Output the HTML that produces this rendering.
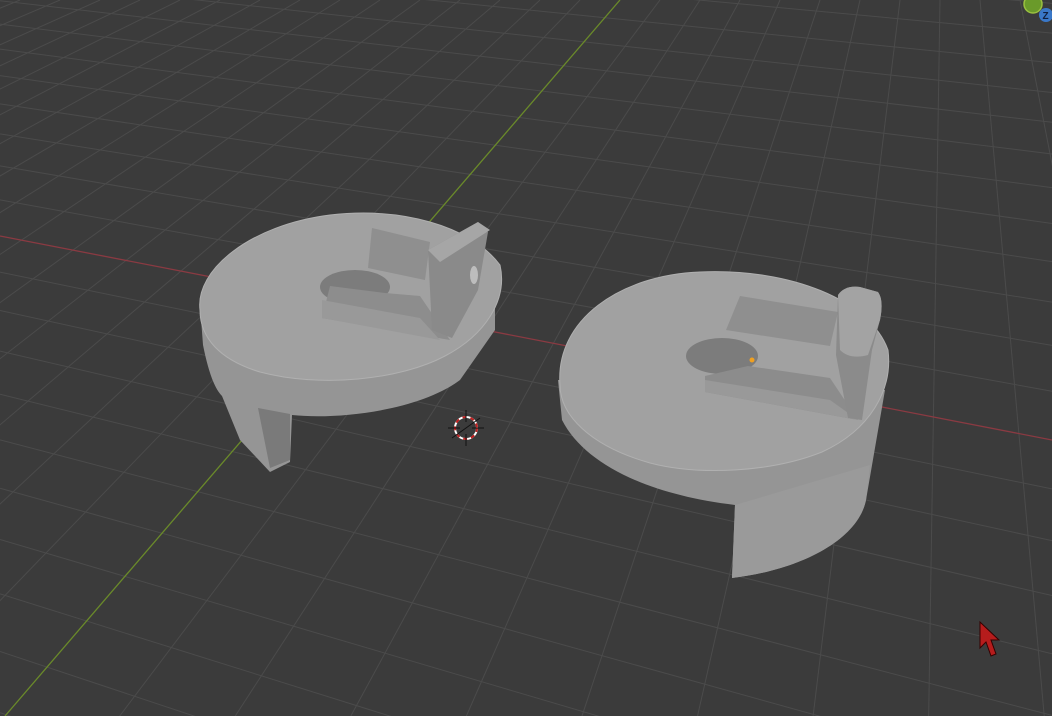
<!DOCTYPE html>
<html><head><meta charset="utf-8"><style>
html,body{margin:0;padding:0;background:#3b3b3b;overflow:hidden;width:1052px;height:716px}
svg{display:block}
</style></head><body>
<svg id="s" width="1052" height="716" viewBox="0 0 1052 716" xmlns="http://www.w3.org/2000/svg">
<rect width="1052" height="716" fill="#3b3b3b"/>
<g id="grid" stroke="#4b4b4b" stroke-width="1"></g>
<line x1="0" y1="236" x2="1052" y2="440" stroke="#8a3a42" stroke-width="1.3"/>
<line x1="620" y1="0" x2="5" y2="716" stroke="#6a8a2a" stroke-width="1.3"/>

<!-- Left object -->
<g>
<path d="M200,305 L203,345 C208,370 214,388 222,396 L240,440 L270,472 L290,462 L292,415 C340,420 420,410 460,380 L495,330 L495,290 Z" fill="#959595"/>
<path d="M258,408 L270,468 L290,460 L290,414 Z" fill="#7a7a7a"/>
<path d="M200,310 C195,270 250,225 330,215 C400,207 470,225 500,265 C508,300 485,335 445,356 C400,380 320,388 260,372 C220,360 200,338 200,310 Z" fill="#a1a1a1" stroke="#b0b0b0" stroke-width="1"/>
<ellipse cx="355" cy="287" rx="35" ry="17" fill="#7c7c7c"/>
<path d="M372,228 L430,242 L425,280 L368,268 Z" fill="#8f8f8f"/>
<path d="M330,286 L385,293 L420,296 L450,340 L322,318 Z" fill="#8d8d8d"/>
<path d="M322,300 L420,318 L440,340 L322,318 Z" fill="#999"/>
<path d="M428,250 L478,222 L488,232 L478,290 L452,338 L432,330 Z" fill="#8a8a8a"/>
<path d="M428,250 L478,222 L490,230 L440,262 Z" fill="#a6a6a6"/>
<ellipse cx="474" cy="275" rx="4" ry="9" fill="#bdbdbd"/>
</g>

<!-- Right object -->
<g>
<path d="M558,380 L562,420 C585,465 650,495 735,505 L732,578 C800,570 858,540 866,500 L885,390 Z" fill="#959595"/>
<path d="M735,505 L732,578 C800,570 858,540 866,500 L870,465 Z" fill="#9a9a9a"/>
<path d="M560,385 C555,320 620,275 700,272 C790,268 870,300 888,350 C893,390 870,430 822,452 C772,472 700,476 650,463 C590,446 560,415 560,385 Z" fill="#a1a1a1" stroke="#b0b0b0" stroke-width="1"/>
<ellipse cx="722" cy="356" rx="36" ry="18" fill="#7c7c7c"/>
<path d="M740,296 L838,312 L830,346 L726,330 Z" fill="#8f8f8f"/>
<path d="M705,376 L748,366 L830,378 L858,420 L705,392 Z" fill="#8c8c8c"/>
<path d="M705,380 L830,400 L858,420 L705,392 Z" fill="#999"/>
<path d="M838,295 Q845,285 860,287 L878,292 Q884,300 880,320 L872,350 L862,420 L848,418 L836,355 Z" fill="#8b8b8b"/>
<path d="M838,295 Q845,285 860,287 L878,292 Q884,300 880,320 L868,355 Q850,360 840,350 Z" fill="#a3a3a3"/>
<circle cx="752" cy="360" r="2.5" fill="#f0a020"/>
</g>

<!-- 3D cursor -->
<g transform="translate(466,428)">
<circle r="11" fill="none" stroke="#fff" stroke-width="2"/>
<circle r="11" fill="none" stroke="#c02020" stroke-width="2" stroke-dasharray="4 4"/>
<g stroke="#111" stroke-width="1">
<line x1="-18" y1="0" x2="-6" y2="0"/><line x1="6" y1="0" x2="18" y2="0"/>
<line x1="0" y1="-18" x2="0" y2="-6"/><line x1="0" y1="6" x2="0" y2="18"/>
<line x1="-14" y1="10" x2="14" y2="-10"/>
</g>
</g>

<path d="M980,622 L980,648 L986,642 L991,656 L996,654 L991,640 L999,640 Z" fill="#b51c1c" stroke="#300" stroke-width="1"/>

<circle cx="1033" cy="4" r="9" fill="#6a9a2a" stroke="#9ac040" stroke-width="1.5"/>
<circle cx="1046" cy="15" r="7" fill="#3a78c8"/>
<text x="1042.5" y="19" font-family="Liberation Sans, sans-serif" font-size="10" font-weight="bold" fill="#102040">Z</text>
</svg>
<script>
(function(){
var g=document.getElementById('grid'),ns='http://www.w3.org/2000/svg';
function L(x1,y1,x2,y2){var l=document.createElementNS(ns,'line');l.setAttribute('x1',x1);l.setAttribute('y1',y1);l.setAttribute('x2',x2);l.setAttribute('y2',y2);g.appendChild(l);}
var vx=-3000,vy=-346;
function rl(y0){var s=(y0-vy)/(0-vx);L(0,y0,1052,y0+s*1052);}
var ys=[],y=236;
while(y<1300){ys.push(y);y=y+(22+0.06*y);}
y=236;while(y>-400){y=y-(22+0.06*Math.max(y,0));ys.push(y);}
ys.forEach(function(v){if(v!==236)rl(v);});
var px=946,py=-379;
function gl(x0){var x716=x0+(x0-px)*716/(0-py);L(x0,0,x716,716);}
for(var x=620-40*25;x<1200;x+=40){if(x!==620)gl(x);}
})();
</script>
</body></html>
